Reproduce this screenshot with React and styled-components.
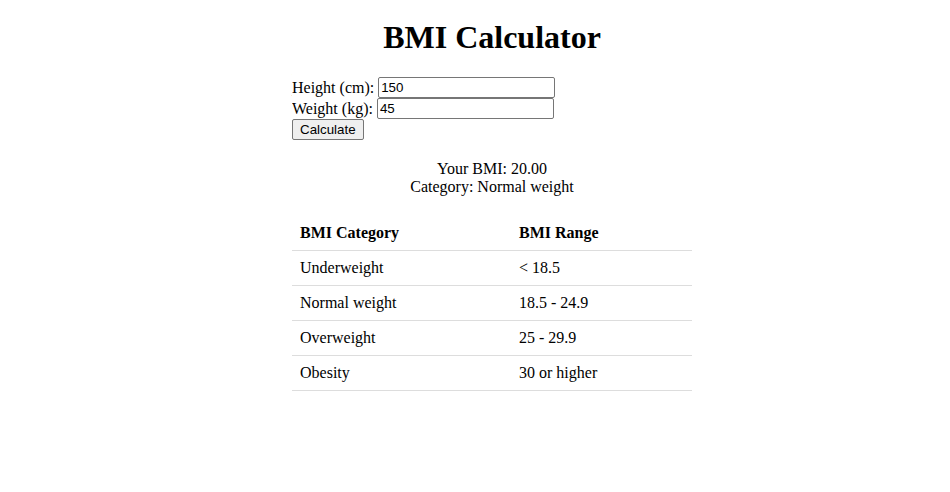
import styled, { createGlobalStyle } from "styled-components";
import { useState } from "react";

const GlobalStyle = createGlobalStyle`
  body {
    margin: 8px 8px 8px 42px;
    font-family: "Liberation Serif", "Times New Roman", serif;
    font-size: 16px;
    color: #000;
    background: #fff;
  }
`;

const Container = styled.div`
  width: 400px;
  margin: 0 auto;
`;

const Title = styled.h1`
  font-size: 32px;
  font-weight: bold;
  text-align: center;
  margin: 11px -100px 21px;
`;

const Form = styled.form`
  display: flex;
  flex-direction: column;
  align-items: flex-start;
`;

const Field = styled.div`
  display: flex;
  align-items: center;
  height: 21px;
`;

const Label = styled.label`
  margin-right: 4px;
`;

const Input = styled.input`
  font-family: "Liberation Sans", Arial, sans-serif;
  font-size: 13.33px;
  width: 177px;
  height: 21px;
  box-sizing: border-box;
  padding: 1px 2px;
  border: 1px solid #767676;
  border-radius: 2px;
  color: #000;
`;

const Button = styled.button`
  font-family: "Liberation Sans", Arial, sans-serif;
  font-size: 13.33px;
  height: 21px;
  padding: 1px 7px;
  background: #efefef;
  border: 1px solid #767676;
  border-radius: 2px;
  color: #000;
`;

const Result = styled.div`
  text-align: center;
  margin-top: 20px;
  line-height: 18px;
`;

const Table = styled.table`
  width: 100%;
  border-collapse: collapse;
  margin-top: 20px;
`;

const Cell = styled.td`
  padding: 8px;
  line-height: 18px;
  text-align: left;
  border-bottom: 1px solid #ddd;
  width: ${(p) => (p.$first ? "203px" : "auto")};
`;

const Head = styled(Cell).attrs({ as: "th" })`
  font-weight: bold;
`;

const ranges = [
  ["Underweight", "< 18.5"],
  ["Normal weight", "18.5 - 24.9"],
  ["Overweight", "25 - 29.9"],
  ["Obesity", "30 or higher"],
];

function App() {
  const [height, setHeight] = useState("150");
  const [weight, setWeight] = useState("45");
  const [bmi, setBmi] = useState(20);

  const calc = (e) => {
    e.preventDefault();
    const h = parseFloat(height) / 100;
    setBmi(parseFloat(weight) / (h * h));
  };

  const category =
    bmi < 18.5
      ? "Underweight"
      : bmi < 25
      ? "Normal weight"
      : bmi < 30
      ? "Overweight"
      : "Obesity";

  return (
    <>
      <GlobalStyle />
      <Container>
        <Title>BMI Calculator</Title>
        <Form onSubmit={calc}>
          <Field>
            <Label htmlFor="height">Height (cm):</Label>
            <Input
              id="height"
              value={height}
              onChange={(e) => setHeight(e.target.value)}
            />
          </Field>
          <Field>
            <Label htmlFor="weight">Weight (kg):</Label>
            <Input
              id="weight"
              value={weight}
              onChange={(e) => setWeight(e.target.value)}
            />
          </Field>
          <Button type="submit">Calculate</Button>
        </Form>
        <Result>
          <div>Your BMI: {bmi.toFixed(2)}</div>
          <div>Category: {category}</div>
        </Result>
        <Table>
          <thead>
            <tr>
              <Head $first>BMI Category</Head>
              <Head>BMI Range</Head>
            </tr>
          </thead>
          <tbody>
            {ranges.map(([name, range]) => (
              <tr key={name}>
                <Cell $first>{name}</Cell>
                <Cell>{range}</Cell>
              </tr>
            ))}
          </tbody>
        </Table>
      </Container>
    </>
  );
}

export default App;
